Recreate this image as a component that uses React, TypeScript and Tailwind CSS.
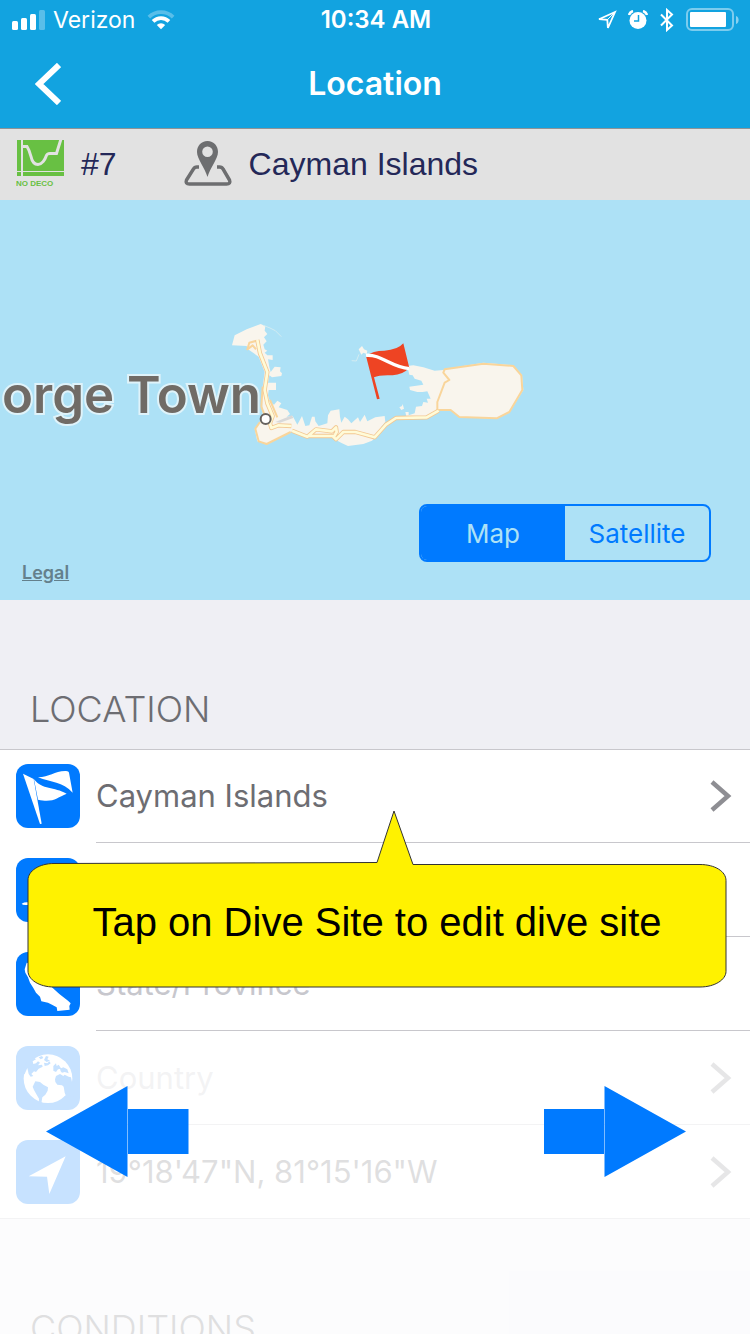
import { type ReactNode } from "react";

const sans = "font-['Inter','Liberation_Sans',sans-serif]";

function StatusBar() {
  return (
    <div className="grid h-10 grid-cols-3 items-center pl-3 pr-[10px] text-white">
      <div className="flex items-center gap-2">
        <svg width="33" height="20" viewBox="0 0 33 20" fill="currentColor">
          <rect x="0" y="11" width="6" height="9" rx="1.5" />
          <rect x="9" y="8" width="6" height="12" rx="1.5" />
          <rect x="18" y="4" width="6" height="16" rx="1.5" />
          <rect x="27" y="0" width="6" height="20" rx="1.5" opacity="0.3" />
        </svg>
        <span className="text-[23px]">Verizon</span>
        <svg className="ml-1" width="28" height="20" viewBox="0 0 30 20" fill="none" stroke="currentColor">
          <path d="M2 7a18.500 18.500 0 0 1 26 0" strokeWidth="4" opacity="0.3" />
          <path d="M6.500 11.500a12 12 0 0 1 17 0" strokeWidth="4" />
          <path d="M15 20l-4.500-4.600a6.500 6.500 0 0 1 9 0z" fill="currentColor" stroke="none" />
        </svg>
      </div>
      <span className="text-center text-2xl font-semibold">10:34 AM</span>
      <div className="flex items-center justify-end gap-[11px]">
        <svg width="20" height="20" viewBox="0 0 20 20" fill="none" stroke="currentColor" strokeWidth="1.800">
          <path d="M18 2L2 9.200l8.300.6.600 8.200z" />
          <path d="M18 2l-7.700 7.800" strokeWidth="1" />
        </svg>
        <svg width="20" height="20" viewBox="0 0 20 20">
          <circle cx="10" cy="10.500" r="8.500" fill="currentColor" />
          <path d="M1 5a6 6 0 0 1 4-4M15 1a6 6 0 0 1 4 4" stroke="currentColor" strokeWidth="2.500" fill="none" />
          <path d="M10.500 5v6H6" stroke="#12a3e0" strokeWidth="1.500" fill="none" />
        </svg>
        <svg width="16" height="24" viewBox="0 0 16 24" fill="none" stroke="currentColor" strokeWidth="2">
          <path d="M2 6.500l11 11L8 22V2l5 4.500-11 11" />
        </svg>
        <svg width="54" height="24" viewBox="0 0 54 24">
          <rect x="1" y="1" width="46" height="21" rx="5" fill="none" stroke="#fff" strokeOpacity="0.450" strokeWidth="2" />
          <rect x="4" y="4" width="36" height="15" rx="1" fill="#fff" />
          <path d="M50 8c3.500 1 3.500 7 0 8z" fill="#fff" opacity="0.500" />
        </svg>
      </div>
    </div>
  );
}

function NavBar() {
  return (
    <div className="grid h-[88px] grid-cols-[96px_1fr_96px] items-center text-white">
      <button type="button" aria-label="Back" className="flex h-full items-center justify-center">
        <svg width="26" height="42" viewBox="0 0 26 42" fill="none" stroke="currentColor" strokeWidth="6">
          <path d="M24 2L4 21l20 19" />
        </svg>
      </button>
      <h1 className="text-center text-[32px] font-semibold leading-10">Location</h1>
    </div>
  );
}

function DiveSummary() {
  return (
    <div className="flex h-[72px] items-center border-t border-[#8f9396] bg-[#e2e2e2] pb-px pl-4 font-['Liberation_Sans',sans-serif] text-[32px] text-[#242858]">
      <svg width="49" height="48" viewBox="0 0 49 48" fill="#68c043">
        <path d="M1 0h4v31H1zM7 0h41v31H7zM1 32h4v4H1zM7 32h41v4H7z" />
        <path d="M5 6.500h6c2 3 3 6 4 10 1 5 3 8 7 8s7-5 8-8 2-3 4-3h6.500L45 -1" fill="none" stroke="#e2e2e2" strokeWidth="3" />
        <text x="0" y="46" fontSize="8" fontWeight="700">
          NO DECO
        </text>
      </svg>
      <span className="ml-4">#7</span>
      <svg className="ml-[66px]" width="50" height="46" viewBox="0 0 50 46">
        <path
          d="M16 26h-2q-2.500 0-3.500 2L3.500 39q-1.500 4 3 4h37q4.500 0 3-4L40 28q-1-2-3.500-2H34"
          fill="none"
          stroke="#6d6e70"
          strokeWidth="3.500"
        />
        <path
          d="M24.500 0C18 0 14 5 14 11c0 7 8 16 10.500 25C27 27 35 18 35 11 35 5 31 0 24.500 0zm0 5.500a5.300 5.300 0 1 1 0 10.600 5.300 5.300 0 0 1 0-10.600z"
          fill="#6d6e70"
          fillRule="evenodd"
        />
      </svg>
      <span className="ml-4">Cayman Islands</span>
    </div>
  );
}

function IslandMap() {
  return (
    <svg className="absolute left-[220px] top-[110px]" width="320" height="150" viewBox="0 0 960 450">
      <g fill="#f9f5ed">
        <path d="M36 106L44 76 80 58 122 42 136 48 134 62 142 72 132 82 140 94 130 104 134 118 142 122 134 128 142 136 158 136 158 150 144 148 148 172 152 186 164 170 182 172 180 184 186 190 184 198 156 202 148 196 144 218 168 218 168 240 146 240 144 256 150 276 162 284 172 272 184 280 176 292 202 300 210 312 200 320 218 318 232 344 246 318 256 348 268 346 276 320 284 320 286 334 296 348 322 340 324 316 332 302 358 298 360 320 364 338 374 320 384 328 394 340 414 322 420 336 434 314 442 334 466 322 494 318 496 336 484 350 470 378 456 392 430 402 384 408 366 400 352 392 340 382 262 380 218 364 140 402 112 394 104 356 122 334 128 310 126 270 128 230 134 186 116 140 84 118 80 108z" />
        <path d="M416 118l10-10 6 10 10 4-2 10-10-4-6 6z" />
        <path d="M562 168L580 166 610 172 644 182 670 180 680 176 790 158 880 166 906 195 910 240 868 308 830 326 718 322 692 300 652 302 620 324 560 324 556 306 566 306 566 316 584 310 588 290 606 288 610 276 624 278 620 266 632 266 622 244 608 246 592 246 570 240 568 230 610 224 604 212 584 206 578 196 568 194z" />
        <path d="M538 292l8-4 2-6 4 14-8 4z" />
      </g>
      <path d="M130 46l20 8 16 8 18 18M395 152l14 1 8-20" fill="none" stroke="#d3ecf2" strokeWidth="3" />
      <g fill="none" stroke="#f9d59b" strokeWidth="6" strokeLinejoin="round">
        <path d="M110 92L88 98 82 118 98 106 108 118M128 230L124 290 138 326M150 270L172 322M120 336L106 356 116 394 140 402 212 366" />
        <path d="M652 300L652 276 674 218 688 210 670 188 674 178 790 161 880 168 904 196 907 240 868 306 830 325 718 321 692 300z" />
      </g>
      <path d="M166 336l50-20 4 8-40 14z" fill="#d9d9d9" />
      {[
        { color: "#f3c893", width: 13 },
        { color: "#fffbd8", width: 8 },
      ].map((road) => (
        <path
          key={road.color}
          d="M112 90L120 130 142 186 134 240 142 280 158 318 150 340 154 354 176 346 214 348M216 362L262 380 288 358 336 364 348 352 350 366 342 380M262 378L338 378 348 388 370 366 406 366 464 382 498 344 528 324 620 322 656 302"
          fill="none"
          stroke={road.color}
          strokeWidth={road.width}
          strokeLinejoin="round"
        />
      ))}
      <circle cx="137" cy="327" r="15" fill="#fff" stroke="#66625f" strokeWidth="6" />
      <path d="M438 138q20-16 55-16 40-2 57-22l18 74q-20 20-50 22-40-2-56 6l17 64-8 2z" fill="#ee4423" />
      <path d="M438 136c45-4 75 36 130 40" fill="none" stroke="#fff" strokeWidth="10" />
    </svg>
  );
}

function MapPanel() {
  return (
    <div className="relative h-[400px] overflow-hidden bg-[#ade1f6]">
      <IslandMap />
      <span className="absolute left-[2px] top-[165px] whitespace-nowrap text-[51px] font-semibold leading-[60px] text-[#706b66] [paint-order:stroke_fill] [-webkit-text-stroke:4px_#dff3fa]">
        orge Town
      </span>
      <a
        href="#legal"
        className="absolute bottom-[15px] left-[22px] text-lg font-semibold leading-6 text-[#64808c] underline"
      >
        Legal
      </a>
      <div className="absolute bottom-[38px] right-[39px] grid h-[58px] w-[292px] grid-cols-2 overflow-hidden rounded-lg border-2 border-[#007aff] text-[26px]">
        <button type="button" className="bg-[#007aff] text-[#ade1f6]">
          Map
        </button>
        <button type="button" className="text-[#007aff]">
          Satellite
        </button>
      </div>
    </div>
  );
}

function SectionHeading({ children }: { children: ReactNode }) {
  return (
    <h2 className="flex h-[149px] items-end bg-[#efeff4] px-[30px] pb-4 text-[36px] font-light leading-[48px] text-[#6d6d72]">
      {children}
    </h2>
  );
}

const icons = {
  flag: (
    <>
      <path d="M21 29l32 16 24 134-5 1z" />
      <path d="M66 40c35 0 50-20 84-19 6 1 8 2 9 5l11 60C140 52 105 56 66 40z" />
      <path d="M54 46c25 32 60 22 98 43-30 12-40 28-86 18z" />
    </>
  ),
  island: <path d="M17 137q8-5 20-4l60-50 30 50h46v6l-140 2q-14 1-16-4z" />,
  state: (
    <path d="M32 32L84 46 76 92 106 104 130 126 156 146 164 154 160 162 161 173 124 177 122 166 108 158 96 152 76 148 72 134 60 122 52 108 42 92 36 76 28 62 26 52z" />
  ),
  globe: (
    <>
      <circle cx="96" cy="98" r="73" />
      <g fill="#007aff">
        <path d="M58 106L72 108 82 116 96 124 95 134 88 146 79 154 77 166 76 174 68 172 69 158 62 146 54 132 50 122z" />
        <path d="M117 100L120 90 132 84 142 90 146 86 158 92 165 94 168 108 176 96V150L150 156 144 152 150 150 146 140 143 122 138 118 124 116 118 108z" />
        <path d="M20 88L30 50 52 34 60 40 50 46 52 54 60 52 66 46 72 50 66 58 78 56 80 62 68 68 60 78 54 76 46 84 52 90 44 92 38 84 34 66 26 84z" />
        <path d="M68 34l10-4 4 6-8 4zM90 30l8 2-4 8 8 4-10 4-8-6zM84 50l10 2 6-6 4 6-8 6-10 2zM112 60l8-8 2 8 6-4 8 12-10 2-6 8-8-4zM132 68l10-4 12 6 4 12-12-4-8 2-4-4z" />
      </g>
    </>
  ),
  arrow: <path d="M149 49L38 109l55 1 7 52z" />,
};

function RowIcon({ name }: { name: keyof typeof icons }) {
  return (
    <svg className="size-16 shrink-0 rounded-xl bg-[#007aff]" viewBox="0 0 192 192" fill="#fff">
      {icons[name]}
    </svg>
  );
}

function Chevron() {
  return (
    <svg width="22" height="32" viewBox="0 0 22 32" fill="none" stroke="#8e8e93" strokeWidth="4.500">
      <path d="M2 2l16 14L2 30" />
    </svg>
  );
}

type Row = {
  icon: keyof typeof icons;
  label: string;
  value?: string;
  placeholder?: string;
  editable?: boolean;
};

const rows: Row[] = [
  { icon: "flag", label: "Dive site", value: "Cayman Islands" },
  { icon: "island", label: "City", editable: true },
  { icon: "state", label: "State", placeholder: "State/Province", editable: true },
  { icon: "globe", label: "Country", placeholder: "Country" },
  { icon: "arrow", label: "Coordinates", value: "19°18'47\"N, 81°15'16\"W" },
];

function LocationRow({ row }: { row: Row }) {
  return (
    <li className="flex h-[94px] gap-4 border-t border-t-transparent bg-white pl-4 first:border-t-[#c8c7cc] last:border-b last:border-b-[#c8c7cc]">
      <div className="pt-[14px]">
        <RowIcon name={row.icon} />
      </div>
      <div className="flex min-w-0 flex-1 border-b border-[#c8c7cc] in-[li:last-child]:border-b-0">
        {row.editable ? (
          <input
            aria-label={row.label}
            placeholder={row.placeholder}
            className="w-full text-[31px] placeholder:text-[#c7c7cd]"
          />
        ) : (
          <button type="button" className="flex w-full items-center justify-between pr-[18px] text-left text-[31px]">
            <span className={row.value ? "text-[#6d6d72]" : "text-[#c7c7cd]"}>{row.value ?? row.placeholder}</span>
            <Chevron />
          </button>
        )}
      </div>
    </li>
  );
}

function Callout() {
  return (
    <div className="absolute left-[27px] right-[23px] top-[61px] h-[178px]">
      <svg className="size-full" viewBox="0 0 700 178" preserveAspectRatio="none">
        <path
          d="M27 53.500L350 52.500 367 1l19 53.500h287c15 0 26 7 26 16v91c0 8-11 15.500-26 15.500H27c-15 0-26-7.500-26-16V70c0-9 11-16.500 26-16.500z"
          fill="#fff200"
          stroke="#333"
        />
      </svg>
      <p className="absolute inset-x-0 top-[88px] text-center font-['Liberation_Sans',sans-serif] text-[40px] leading-[48px] text-black">
        Tap on Dive Site to edit dive site
      </p>
    </div>
  );
}

function PageArrows() {
  return (
    <div className="absolute inset-x-0 top-[1031px] bottom-0 flex items-start justify-between bg-white/78 pl-[46px] pr-16 pt-[55px]">
      <button type="button" aria-label="Previous">
        <svg width="143" height="92" viewBox="0 0 143 92" fill="#007aff">
          <path d="M0 45.500L81.500 0v91zM82 23h60.500v45H82z" />
        </svg>
      </button>
      <button type="button" aria-label="Next">
        <svg width="143" height="92" viewBox="0 0 143 92" fill="#007aff">
          <path d="M143 45.500L61.500 0v91zM1 23h60v45H1z" />
        </svg>
      </button>
    </div>
  );
}

export default function App() {
  return (
    <main className={`relative h-screen overflow-hidden bg-[#efeff4] ${sans}`}>
      <header className="bg-[#12a3e0]">
        <StatusBar />
        <NavBar />
      </header>
      <DiveSummary />
      <MapPanel />
      <SectionHeading>LOCATION</SectionHeading>
      <div className="relative">
        <ul>
          {rows.map((row) => (
            <LocationRow key={row.label} row={row} />
          ))}
        </ul>
        <Callout />
      </div>
      <SectionHeading>CONDITIONS</SectionHeading>
      <PageArrows />
    </main>
  );
}
